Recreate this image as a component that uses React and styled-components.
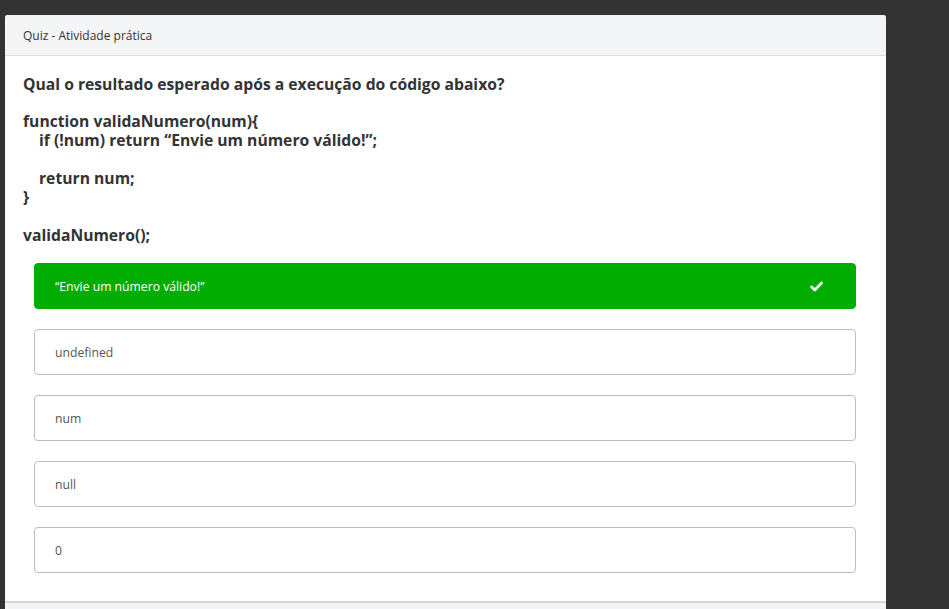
import React from "react";
import styled, { createGlobalStyle } from "styled-components";

const Global = createGlobalStyle`
  html, body { margin: 0; padding: 0; background: #333333; }
  body { font-family: "Open Sans", "Noto Sans", Arial, sans-serif; overflow: hidden; }
`;

const Page = styled.div`
  padding: 15px 0 0 5px;
  height: 609px;
  box-sizing: border-box;
`;

const Card = styled.div`
  width: 881px;
  background: #ffffff;
  border-radius: 3px 3px 0 0;
  overflow: hidden;
`;

const Header = styled.div`
  height: 41px;
  box-sizing: border-box;
  background: #f4f5f6;
  border-bottom: 1px solid #dcdcdc;
  display: flex;
  align-items: center;
  padding-left: 18px;
  font-size: 12px;
  color: #333;
`;

const Body = styled.div`
  padding: 19px 30px 28px 18px;
`;

const Question = styled.p`
  margin: 0 0 18px;
  font-size: 15.7px;
  line-height: 19px;
  font-weight: 700;
  color: #333;
`;

const Code = styled.div`
  font-size: 15.7px;
  line-height: 19px;
  font-weight: 700;
  color: #333;
  margin-bottom: 18px;
`;

const Line = styled.div`
  padding-left: ${(p) => (p.$indent ? "16px" : "0")};
  min-height: 19px;
  white-space: pre;
`;

const Options = styled.div`
  display: flex;
  flex-direction: column;
  gap: 20px;
  padding-left: 11px;
`;

const Option = styled.div`
  height: 46px;
  box-sizing: border-box;
  border-radius: 4px;
  border: 1px solid ${(p) => (p.$correct ? "#00ad00" : "#bdbdbd")};
  background: ${(p) => (p.$correct ? "#00ad00" : "#ffffff")};
  color: ${(p) => (p.$correct ? "#ffffff" : "#555")};
  display: flex;
  align-items: center;
  justify-content: space-between;
  padding: 0 32px 0 20px;
  font-size: 12.2px;
  font-weight: 400;
`;

const Footer = styled.div`
  border-top: 2px solid #d4d4d4;
  background: #f3f4f6;
  height: 20px;
`;

const Check = () => (
  <svg width="13" height="11" viewBox="0 0 13 11" aria-hidden="true">
    <path d="M1.5 5.8 L4.8 9 L11.5 2" fill="none" stroke="#fff" strokeWidth="2.6" strokeLinecap="round" strokeLinejoin="round" />
  </svg>
);

const options = ["“Envie um número válido!”", "undefined", "num", "null", "0"];

export default function App() {
  return (
    <>
      <Global />
      <Page>
        <Card>
          <Header>Quiz - Atividade prática</Header>
          <Body>
            <Question>Qual o resultado esperado após a execução do código abaixo?</Question>
            <Code>
              <Line>function validaNumero(num){"{"}</Line>
              <Line $indent>if (!num) return “Envie um número válido!”;</Line>
              <Line> </Line>
              <Line $indent>return num;</Line>
              <Line>{"}"}</Line>
              <Line> </Line>
              <Line>validaNumero();</Line>
            </Code>
            <Options>
              {options.map((o, i) => (
                <Option key={i} $correct={i === 0}>
                  <span>{o}</span>
                  {i === 0 && <Check />}
                </Option>
              ))}
            </Options>
          </Body>
          <Footer />
        </Card>
      </Page>
    </>
  );
}
